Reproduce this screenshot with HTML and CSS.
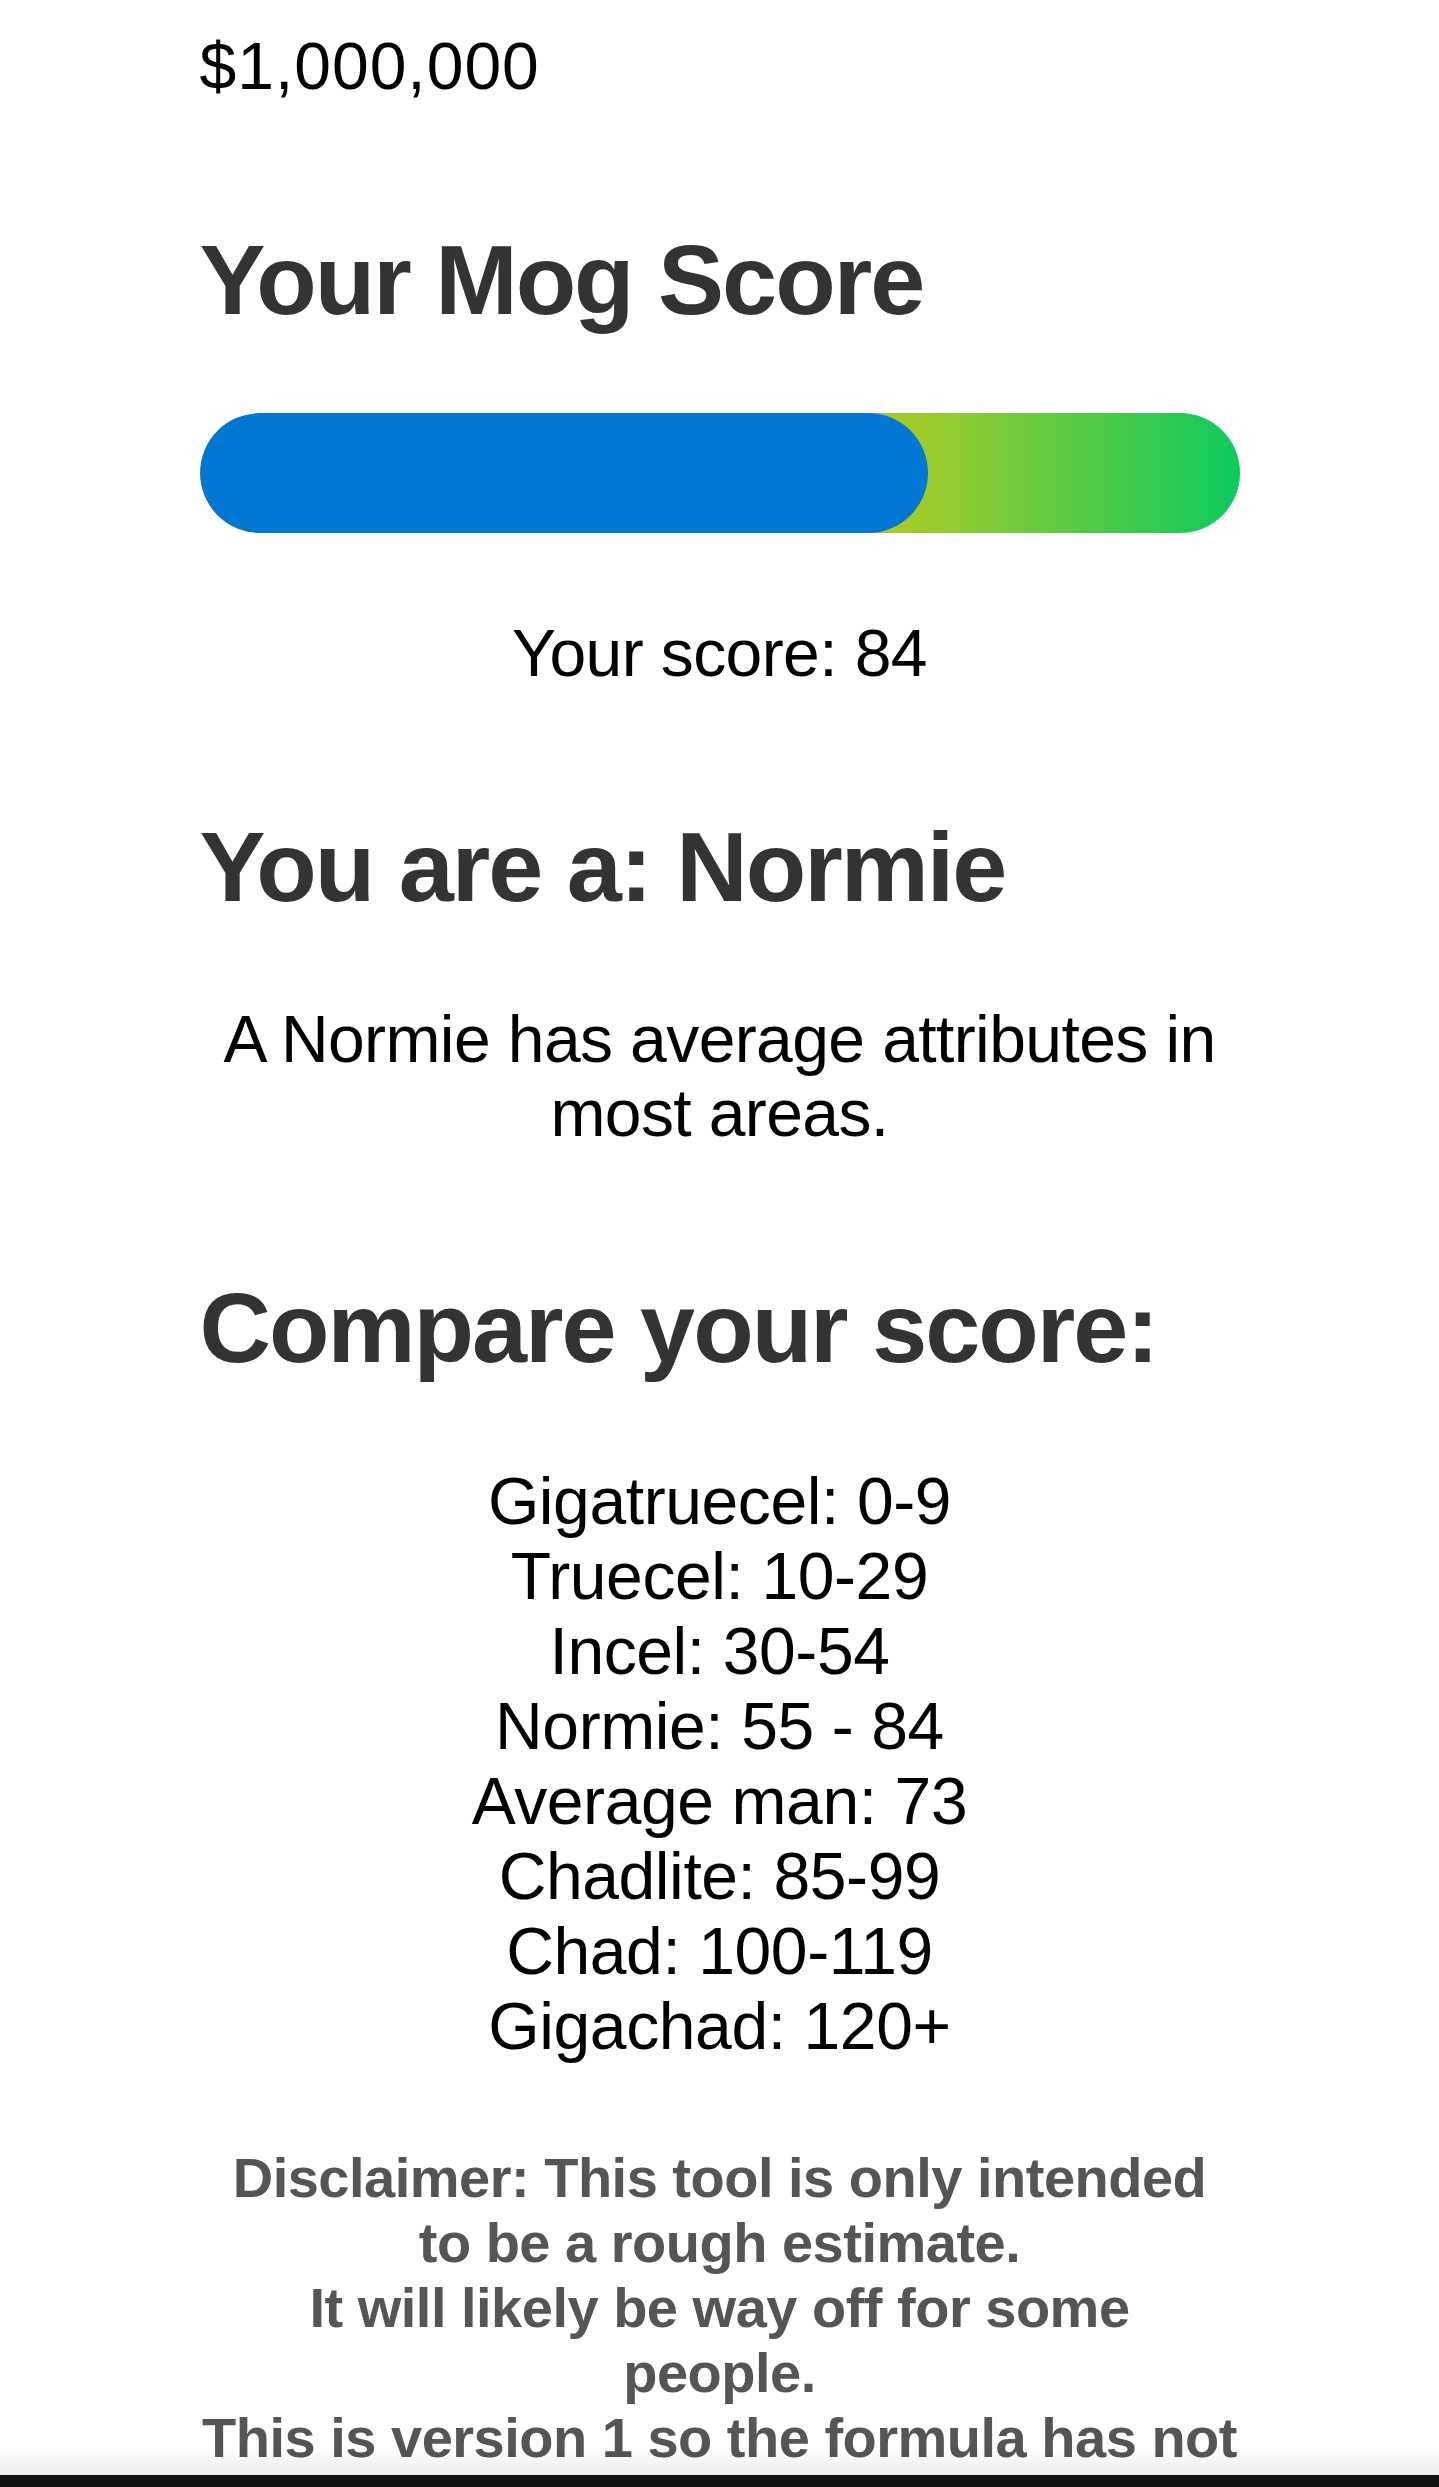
FILE: index.html
```html
<!DOCTYPE html>
<html lang="en">
<head>
    <meta charset="UTF-8">
    <meta name="viewport" content="width=device-width, initial-scale=1.0">
    <title>Mog Score Calculator</title>
    <link rel="stylesheet" href="styles.css">
</head>
<body>
    <div class="container">
        <p class="prize">$1,000,000</p>

        <h1 class="title first">Your Mog Score</h1>

        <div class="meter">
            <div class="meter-fill" style="width: 70%;"></div>
        </div>

        <p class="score">Your score: 84</p>

        <h2 class="title">You are a: Normie</h2>
        <p class="desc">A Normie has average attributes in most areas.</p>

        <h2 class="title compare">Compare your score:</h2>
        <ul class="ranks">
            <li>Gigatruecel: 0-9</li>
            <li>Truecel: 10-29</li>
            <li>Incel: 30-54</li>
            <li>Normie: 55 - 84</li>
            <li>Average man: 73</li>
            <li>Chadlite: 85-99</li>
            <li>Chad: 100-119</li>
            <li>Gigachad: 120+</li>
        </ul>

        <p class="disclaimer">
            Disclaimer: This tool is only intended to be a rough estimate.<br>
            It will likely be way off for some<br>people.<br>
            This is version 1 so the formula has not been perfected yet.
        </p>
    </div>

    <div class="bottom-bar"></div>
</body>
</html>
```

FILE: styles.css
```css
body { font-family: "Liberation Sans", Arial, Helvetica, sans-serif; margin: 0; background: white; color: black; }
.container { width: 1040px; margin: 0 auto; padding-top: 29px; }
p { margin: 0; }
.prize { font-size: 66px; line-height: 75px; letter-spacing: 1px; }
.title { font-size: 99px; line-height: 114px; font-weight: bold; color: #333; letter-spacing: -2px; margin: 119px 0 0; }
.compare { margin-top: 121px; }
.meter { height: 120px; margin-top: 76px; border-radius: 60px; overflow: hidden; background: linear-gradient(to right, #f2c230 0%, #c8c82a 55%, #9ccb2c 70%, #0cca5e 100%); }
.meter-fill { height: 100%; background-color: #0277d4; border-radius: 60px; }
.score { font-size: 66px; line-height: 75px; letter-spacing: -0.6px; text-align: center; margin-top: 83px; }
.desc { font-size: 66px; line-height: 74px; letter-spacing: -0.6px; text-align: center; margin-top: 78px; }
.ranks { list-style: none; padding: 0; margin: 79px 0 0; text-align: center; font-size: 66px; line-height: 75px; letter-spacing: -0.4px; }
.disclaimer { font-size: 56px; line-height: 65px; font-weight: bold; color: #555; letter-spacing: -0.5px; text-align: center; margin-top: 81px; }
.bottom-bar { position: fixed; left: 0; right: 0; bottom: 0; height: 40px; pointer-events: none; background: linear-gradient(to bottom, rgba(0,0,0,0) 0, rgba(0,0,0,0.08) 28px, #111 28px, #111 40px); }
```
